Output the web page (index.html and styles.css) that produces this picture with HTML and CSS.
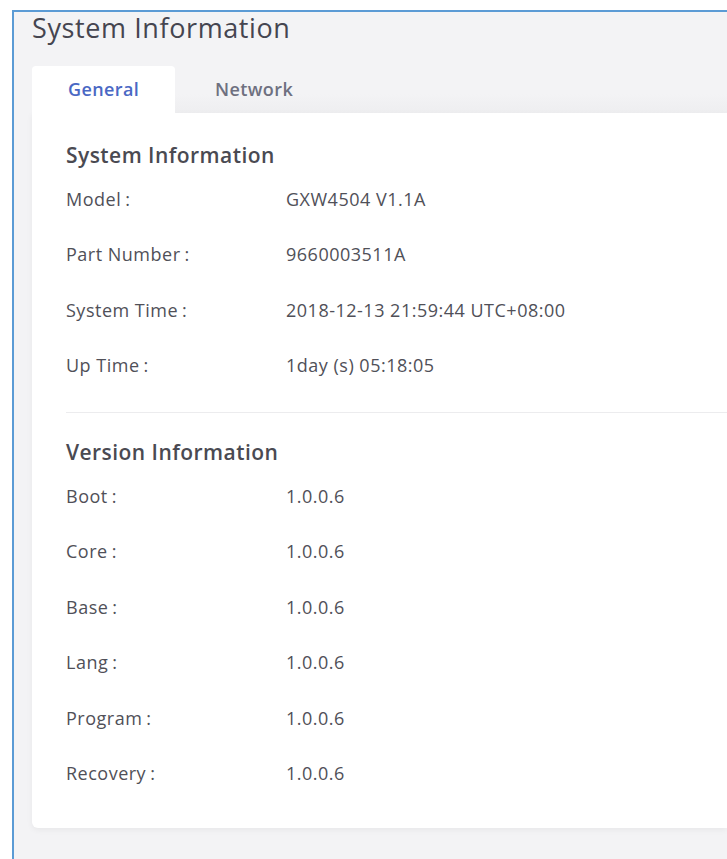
FILE: index.html
```html
<!DOCTYPE html>
<html lang="en">
<head>
<meta charset="utf-8">
<title>System Information</title>
<link rel="stylesheet" href="styles.css">
</head>
<body>
<div class="frame">
  <h1 class="page-title">System Information</h1>
  <div class="tabs">
    <div class="tab active">General</div>
    <div class="tab">Network</div>
  </div>
  <div class="card">
    <section class="group">
      <h2 class="group-title">System Information</h2>
      <div class="row"><span class="label">Model<span class="colon">:</span></span><span class="value">GXW4504 V1.1A</span></div>
      <div class="row"><span class="label">Part Number<span class="colon">:</span></span><span class="value">9660003511A</span></div>
      <div class="row"><span class="label">System Time<span class="colon">:</span></span><span class="value">2018-12-13 21:59:44 UTC+08:00</span></div>
      <div class="row"><span class="label">Up Time<span class="colon">:</span></span><span class="value">1day (s) 05:18:05</span></div>
    </section>
    <hr class="divider">
    <section class="group">
      <h2 class="group-title">Version Information</h2>
      <div class="row"><span class="label">Boot<span class="colon">:</span></span><span class="value">1.0.0.6</span></div>
      <div class="row"><span class="label">Core<span class="colon">:</span></span><span class="value">1.0.0.6</span></div>
      <div class="row"><span class="label">Base<span class="colon">:</span></span><span class="value">1.0.0.6</span></div>
      <div class="row"><span class="label">Lang<span class="colon">:</span></span><span class="value">1.0.0.6</span></div>
      <div class="row"><span class="label">Program<span class="colon">:</span></span><span class="value">1.0.0.6</span></div>
      <div class="row"><span class="label">Recovery<span class="colon">:</span></span><span class="value">1.0.0.6</span></div>
    </section>
  </div>
</div>
</body>
</html>
```

FILE: styles.css
```css
html, body {
  margin: 0;
  padding: 0;
  background: #ffffff;
  font-family: "Open Sans", "Noto Sans", "DejaVu Sans", sans-serif;
  overflow: hidden;
}

.frame {
  margin: 10px 0 0 12px;
  border-top: 2px solid #5b9bd5;
  border-left: 2px solid #5b9bd5;
  background: #f3f3f5;
  padding-left: 18px;
  min-height: 860px;
  box-sizing: border-box;
}

.page-title {
  margin: 0;
  font-size: 27px;
  line-height: 32px;
  font-weight: 500;
  letter-spacing: 0.6px;
  color: #454550;
}

.tabs {
  display: flex;
  align-items: stretch;
  margin-top: 22px;
  height: 47px;
  background: linear-gradient(to bottom, #f3f3f5 0, #f3f3f5 28px, #eeeef0 47px);
}

.tab {
  padding: 0 35px 0 36px;
  font-size: 18px;
  font-weight: 600;
  letter-spacing: 0.4px;
  line-height: 47px;
  color: #6e7080;
}

.tab + .tab {
  margin-left: 4px;
}

.tab.active {
  width: 72px;
  background: #ffffff;
  color: #4a68c4;
  border-radius: 4px 4px 0 0;
}

.card {
  background: #ffffff;
  border-radius: 0 0 0 6px;
  box-shadow: 0 2px 6px rgba(0, 0, 0, 0.05);
  padding: 28px 0 27px 34px;
}

.group-title {
  margin: 0 0 2px;
  font-size: 21px;
  line-height: 28px;
  font-weight: 600;
  letter-spacing: 0.45px;
  color: #4a4a52;
}

.row {
  display: flex;
  align-items: center;
  height: 55.5px;
  font-size: 18px;
  letter-spacing: 0.5px;
  color: #505058;
}

.label {
  width: 220px;
  flex: none;
}

.colon {
  margin-left: 4px;
}

.divider {
  border: 0;
  border-top: 1px solid #ececee;
  margin: 19px 0 25px;
}
```
